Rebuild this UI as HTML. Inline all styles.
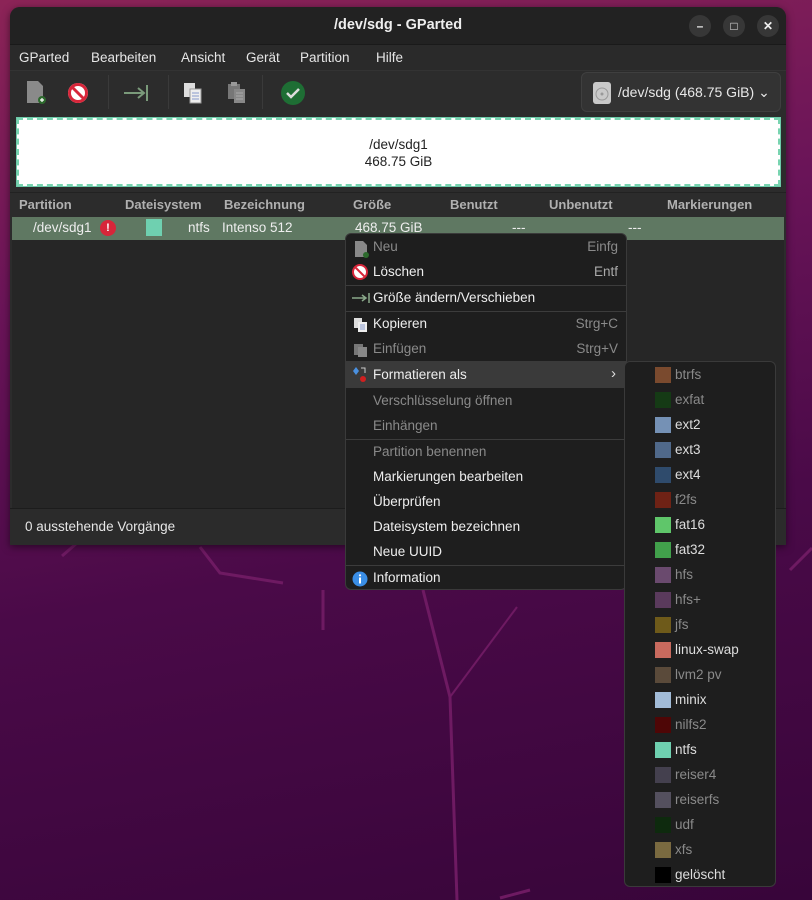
<!DOCTYPE html>
<html><head><meta charset="utf-8"><style>
*{box-sizing:border-box;margin:0;padding:0}
body{width:812px;height:900px;overflow:hidden;position:relative;font-family:"Liberation Sans",sans-serif;font-size:13.5px;color:#ddd;
background:linear-gradient(170deg,#8c2457 0%,#6a1458 30%,#4a0a48 60%,#38053a 100%)}
.abs{position:absolute}
.win{left:10px;top:7px;width:776px;height:538px;background:#2c2c2c;border-radius:10px 10px 0 0;overflow:hidden;box-shadow:0 2px 8px rgba(0,0,0,.5)}
.title{left:0;top:0;width:776px;height:37px;background:#222;text-align:center;line-height:37px;font-weight:bold;color:#eee;font-size:14.5px}
.wb{top:8px;width:22px;height:22px;border-radius:11px;background:#373737;color:#eee;text-align:center;line-height:22px;font-size:12px;font-weight:bold}
.menu{left:0;top:37px;width:776px;height:26px;background:#2a2a2a;border-top:1px solid #1a1a1a}
.menu span{position:absolute;top:5px;color:#e6e6e6}
.tb{left:0;top:63px;width:776px;height:43px;background:#2c2c2c;border-top:1px solid #333}
.disk{left:7px;top:111px;width:763px;height:68px;background:#fff;border:2px dashed #78d4b0;outline:1px solid #6cc9a8;text-align:center;color:#222;padding-top:16px;line-height:17px}
.hdr{left:0;top:185px;width:776px;height:25px;background:#2c2c2c;border-top:1px solid #222;color:#b0b0b0;font-weight:bold;font-size:13px}
.hdr span{position:absolute;top:4px}
.row{left:2px;top:210px;width:772px;height:23px;background:#5f7862;color:#eee}
.row span{position:absolute;top:3px}
.list{left:2px;top:233px;width:772px;height:268px;background:#262626}
.status{left:0;top:501px;width:776px;height:37px;background:#2b2b2b;border-top:1px solid #1c1c1c}
.cm{left:345px;top:233px;width:282px;height:357px;background:#1e1e1e;border:1px solid #3a3a3a;border-radius:6px}
.it{position:absolute;left:27px;color:#eee}
.dim{color:#8a8a8a}
.sc{position:absolute;right:8px;color:#8a8a8a}
.sep{position:absolute;left:0;width:280px;height:1px;background:#3c3c3c}
.sub{left:624px;top:361px;width:152px;height:526px;background:#1e1e1e;border:1px solid #3a3a3a;border-radius:6px}
.si{position:absolute;left:30px;height:16px}
.si i{position:absolute;left:0;top:0;width:16px;height:16px}
.si b{position:absolute;left:20px;top:0;font-weight:normal;white-space:nowrap}
</style></head><body>
<svg class="abs" style="left:0;top:0" width="812" height="900"><g stroke="#6e1a62" stroke-width="3" fill="none"><path d="M62 556 L77 543"/><path d="M200 547 L220 573 L283 583"/><path d="M323 590 L323 630"/><path d="M423 590 L450 697 L457 900"/><path d="M450 697 L517 607" stroke-width="2"/><path d="M790 570 L812 548"/><path d="M500 898 L530 890"/></g></svg>
<div class="abs win">
 <div class="abs title">/dev/sdg - GParted</div>
 <div class="abs wb" style="left:679px">–</div>
 <div class="abs wb" style="left:713px">□</div>
 <div class="abs wb" style="left:747px">✕</div>
 <div class="abs menu"><span style="left:9px">GParted</span><span style="left:81px">Bearbeiten</span><span style="left:171px">Ansicht</span><span style="left:236px">Gerät</span><span style="left:290px">Partition</span><span style="left:366px">Hilfe</span></div>
 <div class="abs tb">
  <svg class="abs" style="left:14px;top:8px" width="24" height="26"><path d="M3 2h11l5 5v17H3z" fill="#8a8a8a"/><circle cx="18" cy="21" r="4" fill="#2d6a2d"/><path d="M16 21h4M18 19v4" stroke="#fff" stroke-width="1.2"/></svg>
  <svg class="abs" style="left:56px;top:10px" width="24" height="24"><circle cx="12" cy="12" r="10" fill="#fff"/><circle cx="12" cy="12" r="8.5" fill="none" stroke="#d7263a" stroke-width="3"/><path d="M6 6l12 12" stroke="#d7263a" stroke-width="3"/></svg>
  <div class="abs" style="left:98px;top:4px;width:1px;height:34px;background:#3a3a3a"></div>
  <svg class="abs" style="left:112px;top:12px" width="28" height="20"><path d="M2 10h20M16 5l6 5-6 5M25 2v16" stroke="#7a9a7a" stroke-width="2" fill="none"/></svg>
  <div class="abs" style="left:158px;top:4px;width:1px;height:34px;background:#3a3a3a"></div>
  <svg class="abs" style="left:172px;top:10px" width="22" height="24"><rect x="2" y="2" width="11" height="14" fill="#ddd"/><rect x="8" y="8" width="11" height="14" fill="#eee" stroke="#999"/><path d="M10 12h7M10 15h7M10 18h7" stroke="#8899cc"/></svg>
  <svg class="abs" style="left:216px;top:10px" width="22" height="24"><rect x="2" y="3" width="12" height="15" fill="#777"/><rect x="5" y="1" width="6" height="4" fill="#999"/><rect x="8" y="8" width="11" height="14" fill="#888"/><path d="M10 12h7M10 15h7M10 18h7" stroke="#aaa"/></svg>
  <div class="abs" style="left:252px;top:4px;width:1px;height:34px;background:#3a3a3a"></div>
  <svg class="abs" style="left:270px;top:9px" width="26" height="26"><circle cx="13" cy="13" r="12" fill="#1e6e34"/><path d="M7 13l4 4 8-8" stroke="#ddd" stroke-width="2.5" fill="none"/></svg>
  <div class="abs" style="left:571px;top:1px;width:200px;height:40px;background:#333;border:1px solid #3f3f3f;border-radius:6px">
   <svg class="abs" style="left:10px;top:8px" width="20" height="24"><rect x="1" y="1" width="18" height="22" rx="3" fill="#c9c9c9"/><circle cx="10" cy="13" r="6" fill="none" stroke="#999"/><circle cx="10" cy="13" r="1.5" fill="#999"/></svg>
   <span class="abs" style="left:36px;top:11px;color:#e8e8e8;font-size:14px">/dev/sdg (468.75 GiB) ⌄</span>
  </div>
 </div>
 <div class="abs disk">/dev/sdg1<br>468.75 GiB</div>
 <div class="abs hdr"><span style="left:9px">Partition</span><span style="left:115px">Dateisystem</span><span style="left:214px">Bezeichnung</span><span style="left:343px">Größe</span><span style="left:440px">Benutzt</span><span style="left:539px">Unbenutzt</span><span style="left:657px">Markierungen</span></div>
 <div class="abs row"><span style="left:21px">/dev/sdg1</span><span style="left:88px;top:3px;width:16px;height:16px;border-radius:8px;background:#d7263a;color:#fff;text-align:center;font-size:11px;font-weight:bold;line-height:16px">!</span><span style="left:134px;top:2px;width:16px;height:17px;background:#6fd0b0"></span><span style="left:176px">ntfs</span><span style="left:210px">Intenso 512</span><span style="left:343px">468.75 GiB</span><span style="left:500px">---</span><span style="left:616px">---</span></div>
 <div class="abs list"></div>
 <div class="abs status"><span class="abs" style="left:15px;top:10px;color:#e6e6e6">0 ausstehende Vorgänge</span></div>
</div>
<div class="abs cm">
 <svg class="abs" style="left:7px;top:6px" width="16" height="18"><path d="M2 1h8l4 4v12H2z" fill="#888"/><circle cx="13" cy="15" r="3" fill="#2d6a2d"/></svg>
 <span class="it dim" style="top:5px">Neu</span><span class="sc" style="top:5px">Einfg</span>
 <svg class="abs" style="left:6px;top:30px" width="16" height="16"><circle cx="8" cy="8" r="7" fill="#fff" stroke="#d7263a" stroke-width="2"/><path d="M3.5 3.5l9 9" stroke="#d7263a" stroke-width="2"/></svg>
 <span class="it" style="top:30px">Löschen</span><span class="sc" style="top:30px;color:#aaa">Entf</span>
 <div class="sep" style="top:51px"></div>
 <svg class="abs" style="left:5px;top:58px" width="20" height="12"><path d="M1 6h14M11 3l4 3-4 3M18 1v10" stroke="#8aa88a" stroke-width="1.5" fill="none"/></svg>
 <span class="it" style="top:56px">Größe ändern/Verschieben</span>
 <div class="sep" style="top:77px"></div>
 <svg class="abs" style="left:7px;top:83px" width="16" height="16"><rect x="1" y="1" width="8" height="10" fill="#ddd"/><rect x="5" y="5" width="9" height="10" fill="#eee"/><path d="M7 8h5M7 10h5M7 12h5" stroke="#8899cc"/></svg>
 <span class="it" style="top:82px">Kopieren</span><span class="sc" style="top:82px">Strg+C</span>
 <svg class="abs" style="left:7px;top:108px" width="16" height="16"><rect x="1" y="2" width="9" height="11" fill="#777"/><rect x="5" y="5" width="9" height="10" fill="#888"/></svg>
 <span class="it dim" style="top:107px">Einfügen</span><span class="sc" style="top:107px">Strg+V</span>
 <div class="abs" style="left:0;top:127px;width:280px;height:27px;background:#3a3a3a"></div>
 <svg class="abs" style="left:6px;top:132px" width="16" height="18"><path d="M4 1l3 4-3 4-3-4z" fill="#4a90e0"/><circle cx="11" cy="13" r="3" fill="#d02020"/><path d="M9 2h4v5" stroke="#ccc" fill="none"/></svg>
 <span class="it" style="top:133px">Formatieren als</span><span class="abs" style="right:10px;top:131px;color:#ddd;font-size:15px">›</span>
 <span class="it dim" style="top:159px">Verschlüsselung öffnen</span>
 <span class="it dim" style="top:184px">Einhängen</span>
 <div class="sep" style="top:205px"></div>
 <span class="it dim" style="top:210px">Partition benennen</span>
 <span class="it" style="top:235px">Markierungen bearbeiten</span>
 <span class="it" style="top:260px">Überprüfen</span>
 <span class="it" style="top:285px">Dateisystem bezeichnen</span>
 <span class="it" style="top:310px">Neue UUID</span>
 <div class="sep" style="top:331px"></div>
 <svg class="abs" style="left:6px;top:337px" width="16" height="16"><circle cx="8" cy="8" r="7.5" fill="#3a8ee6"/><rect x="7" y="6.5" width="2" height="6" fill="#fff"/><circle cx="8" cy="4.3" r="1.1" fill="#fff"/></svg>
 <span class="it" style="top:336px">Information</span>
</div>
<div class="abs sub">
 <div class="si" style="top:5px"><i style="background:#7a4a2e"></i><b class="dim">btrfs</b></div>
 <div class="si" style="top:30px"><i style="background:#153a15"></i><b class="dim">exfat</b></div>
 <div class="si" style="top:55px"><i style="background:#7591b5"></i><b>ext2</b></div>
 <div class="si" style="top:80px"><i style="background:#50698a"></i><b>ext3</b></div>
 <div class="si" style="top:105px"><i style="background:#2f4b6c"></i><b>ext4</b></div>
 <div class="si" style="top:130px"><i style="background:#6e2215"></i><b class="dim">f2fs</b></div>
 <div class="si" style="top:155px"><i style="background:#5fc66a"></i><b>fat16</b></div>
 <div class="si" style="top:180px"><i style="background:#41a04b"></i><b>fat32</b></div>
 <div class="si" style="top:205px"><i style="background:#6a4a6e"></i><b class="dim">hfs</b></div>
 <div class="si" style="top:230px"><i style="background:#5a3a5c"></i><b class="dim">hfs+</b></div>
 <div class="si" style="top:255px"><i style="background:#6e5a1a"></i><b class="dim">jfs</b></div>
 <div class="si" style="top:280px"><i style="background:#c86a5e"></i><b>linux-swap</b></div>
 <div class="si" style="top:305px"><i style="background:#5a4a3a"></i><b class="dim">lvm2 pv</b></div>
 <div class="si" style="top:330px"><i style="background:#a2bcd8"></i><b>minix</b></div>
 <div class="si" style="top:355px"><i style="background:#4e0606"></i><b class="dim">nilfs2</b></div>
 <div class="si" style="top:380px"><i style="background:#6fd0b0"></i><b>ntfs</b></div>
 <div class="si" style="top:405px"><i style="background:#44404e"></i><b class="dim">reiser4</b></div>
 <div class="si" style="top:430px"><i style="background:#54505e"></i><b class="dim">reiserfs</b></div>
 <div class="si" style="top:455px"><i style="background:#0e2a0e"></i><b class="dim">udf</b></div>
 <div class="si" style="top:480px"><i style="background:#7a6a40"></i><b class="dim">xfs</b></div>
 <div class="si" style="top:505px"><i style="background:#000"></i><b>gelöscht</b></div>
</div>
</body></html>
